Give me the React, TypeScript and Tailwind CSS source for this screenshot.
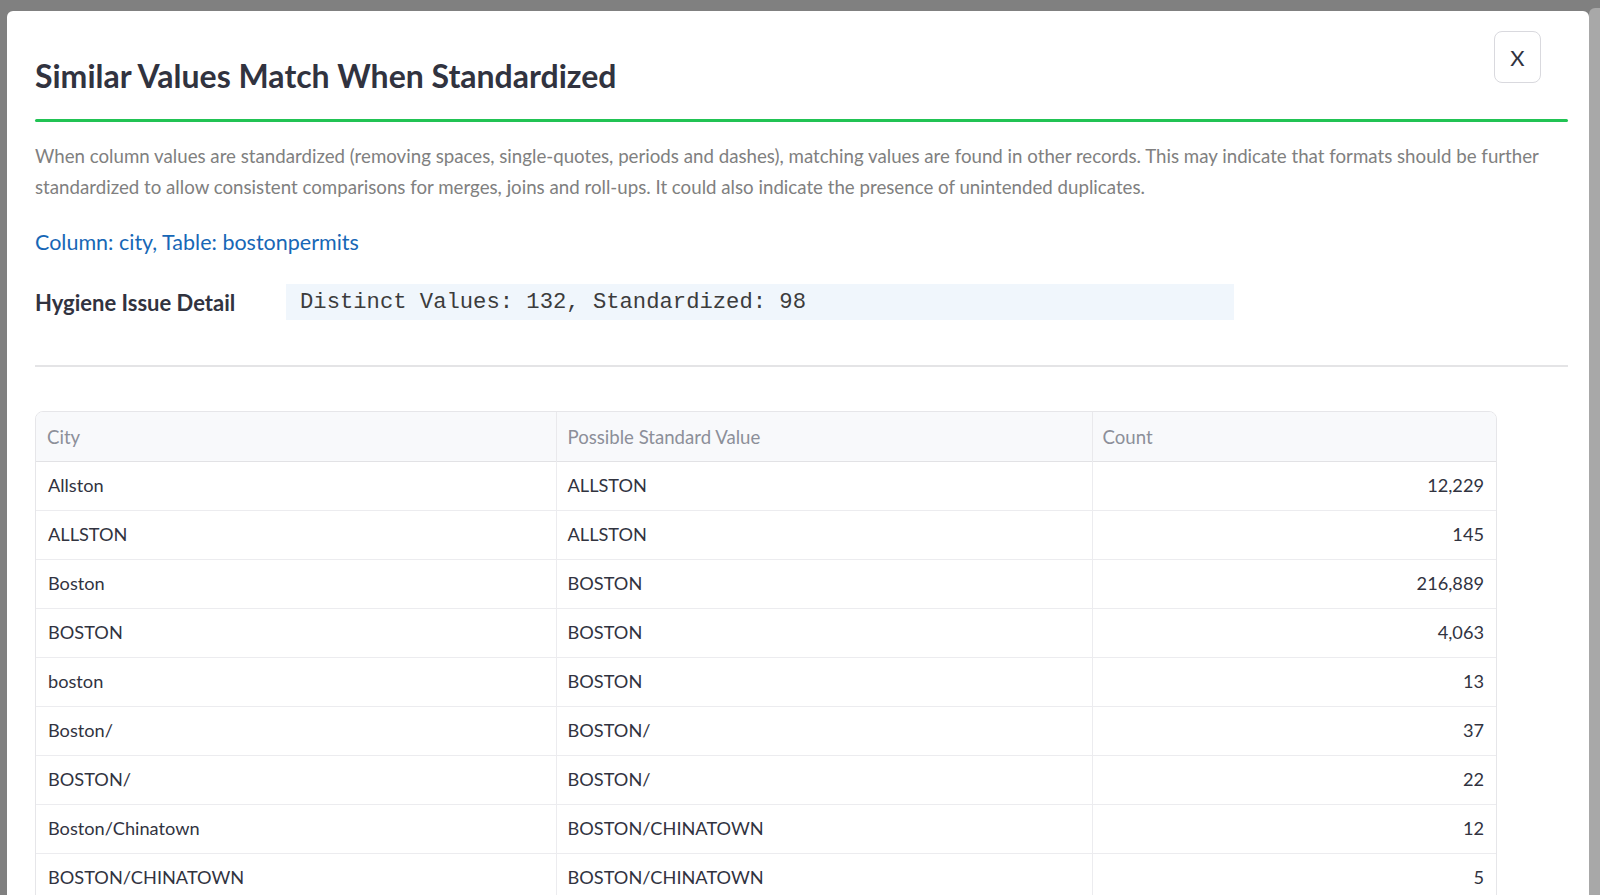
type Row = {
  city: string
  standard: string
  count: number
}

const rows: Row[] = [
  { city: 'Allston', standard: 'ALLSTON', count: 12229 },
  { city: 'ALLSTON', standard: 'ALLSTON', count: 145 },
  { city: 'Boston', standard: 'BOSTON', count: 216889 },
  { city: 'BOSTON', standard: 'BOSTON', count: 4063 },
  { city: 'boston', standard: 'BOSTON', count: 13 },
  { city: 'Boston/', standard: 'BOSTON/', count: 37 },
  { city: 'BOSTON/', standard: 'BOSTON/', count: 22 },
  { city: 'Boston/Chinatown', standard: 'BOSTON/CHINATOWN', count: 12 },
  { city: 'BOSTON/CHINATOWN', standard: 'BOSTON/CHINATOWN', count: 5 },
]

const sans = "font-['Lato','Noto_Sans',sans-serif]"

export default function App() {
  return (
    <div className={`flex h-[895px] overflow-hidden bg-[#808080] pt-[11px] pl-[7px] ${sans}`}>
      {/* dialog */}
      <div className="relative flex-1 rounded-t-md bg-white pt-[45px] pr-[21px] pl-[28px]">
        <button className="absolute top-[20px] right-[48px] flex h-[52px] w-[47px] items-center justify-center rounded-lg border border-[#d9d9de] bg-white text-[22px] text-[#31333f]">
          X
        </button>

        <h2 className="text-[32px] leading-[40px] font-bold text-[#31333f]">
          Similar Values Match When Standardized
        </h2>
        <div className="mt-[23px] h-[3px] rounded-full bg-[#21c354]" />

        <p className="mt-[19px] text-[18.7px] leading-[30.6px] text-[#808080]">
          When column values are standardized (removing spaces, single-quotes, periods and dashes), matching values are
          found in other records. This may indicate that formats should be further standardized to allow consistent
          comparisons for merges, joins and roll-ups. It could also indicate the presence of unintended duplicates.
        </p>

        <div className="mt-[24px] text-[21.5px] leading-[32px] text-[#1767b6]">
          Column: city, Table: bostonpermits
        </div>

        <div className="mt-[26px] flex items-center">
          <div className="w-[251px] text-[22px] font-bold text-[#31333f]">Hygiene Issue Detail</div>
          <div className="flex h-[36px] w-[948px] items-center bg-[#f0f6fc] pl-[14px] font-['Liberation_Mono',monospace] text-[22.2px] text-[#3c3c3c]">
            Distinct Values: 132, Standardized: 98
          </div>
        </div>

        <div className="mt-[45px] h-[2px] bg-[#e4e4e6]" />

        <div className="mt-[44px] w-[1462px] overflow-hidden rounded-t-lg border border-[#e6e6e9] text-[18.2px]">
          <table className="w-full table-fixed border-collapse">
            <colgroup>
              <col className="w-[520px]" />
              <col className="w-[536px]" />
              <col />
            </colgroup>
            <thead>
              <tr className="h-[49px] border-b border-[#e2e2e5] bg-[#f8f9fb] text-left text-[18.6px] text-[#8c8f99]">
                <th className="border-r border-[#e9e9ec] pt-[3px] pl-[11px] font-normal">City</th>
                <th className="border-r border-[#e9e9ec] pt-[3px] pl-[11px] font-normal">Possible Standard Value</th>
                <th className="pt-[3px] pl-[10px] font-normal">Count</th>
              </tr>
            </thead>
            <tbody className="text-[#31333f]">
              {rows.map((r) => (
                <tr key={r.city} className="h-[49px] border-b border-[#ececef]">
                  <td className="border-r border-[#ececef] pl-[12px]">{r.city}</td>
                  <td className="border-r border-[#ececef] pl-[11px]">{r.standard}</td>
                  <td className="pr-[12px] text-right">{r.count.toLocaleString('en-US')}</td>
                </tr>
              ))}
            </tbody>
          </table>
        </div>
      </div>

      {/* page scrollbar area behind the overlay */}
      <div className="mt-[-3px] w-[11px] rounded-tl-md bg-[#a8a8a8]" />
    </div>
  )
}
